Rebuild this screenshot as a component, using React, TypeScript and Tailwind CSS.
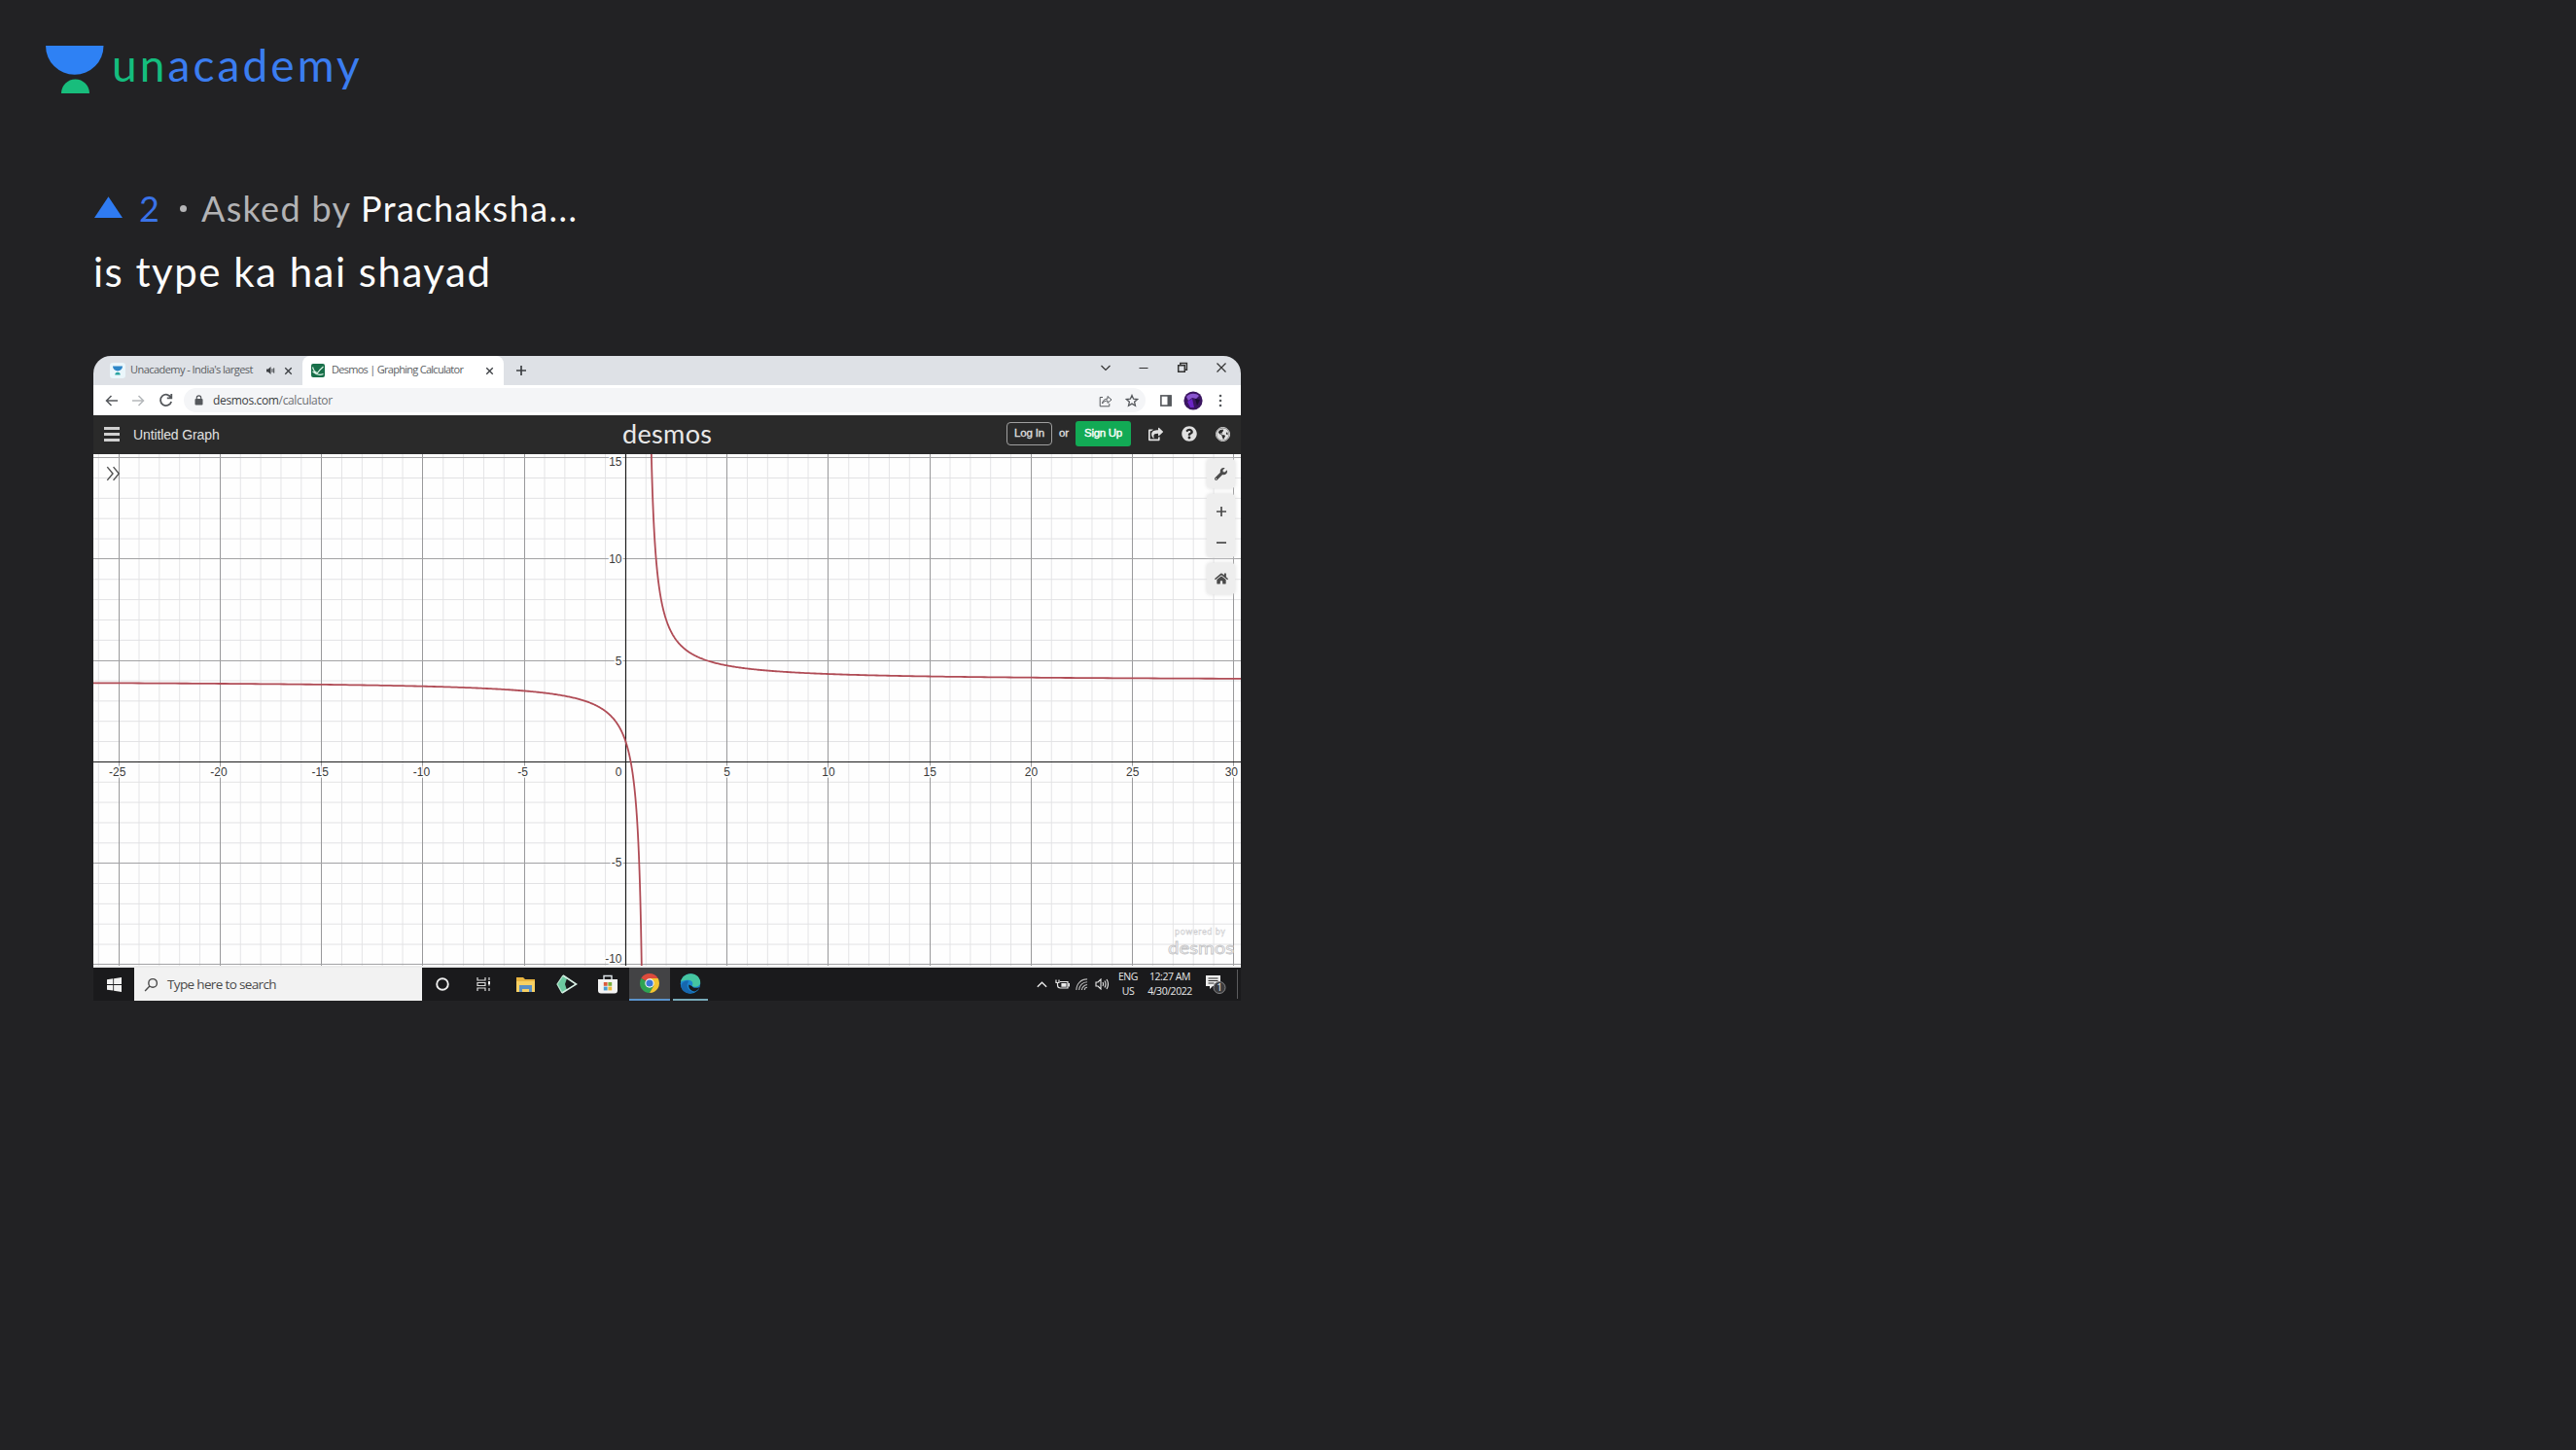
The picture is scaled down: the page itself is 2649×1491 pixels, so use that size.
import React from "react";
import { FaShareSquare, FaQuestionCircle, FaWrench, FaHome, FaGlobeAmericas } from "react-icons/fa";

const UNIT = 20.85;
const OX = 547.4;
const OY = 316.4;
const GW = 1180;
const GH = 526;

const px = (x: number) => OX + x * UNIT;
const py = (y: number) => OY - y * UNIT;
const crisp = (v: number) => Math.floor(v) + 0.5;

function branch(from: number, to: number) {
  const pts: string[] = [];
  const n = 400;
  for (let i = 0; i <= n; i++) {
    const t = i / n;
    const d = from * Math.pow(to / from, t);
    pts.push(px(1 + d).toFixed(2) + "," + py(4 + 3 / d).toFixed(2));
  }
  return "M" + pts.join("L");
}

function Graph() {
  const xs = Array.from({ length: 57 }, (_, i) => i - 26);
  const ys = Array.from({ length: 26 }, (_, i) => i - 10);
  return (
    <svg width={GW} height={GH} viewBox={`0 0 ${GW} ${GH}`} className="block">
      <rect width={GW} height={GH} fill="#fefefe" />
      {xs.filter((x) => x % 5 !== 0).map((x) => (
        <line key={x} x1={px(x)} x2={px(x)} y1={0} y2={GH} stroke="#e4e4e6" strokeWidth={1} />
      ))}
      {ys.filter((y) => y % 5 !== 0).map((y) => (
        <line key={y} x1={0} x2={GW} y1={py(y)} y2={py(y)} stroke="#e2e2e4" strokeWidth={1} />
      ))}
      {xs.filter((x) => x % 5 === 0).map((x) => (
        <line key={x} x1={crisp(px(x))} x2={crisp(px(x))} y1={0} y2={GH} stroke="#99999b" strokeWidth={1} />
      ))}
      {ys.filter((y) => y % 5 === 0).map((y) => (
        <line key={y} x1={0} x2={GW} y1={crisp(py(y))} y2={crisp(py(y))} stroke="#a2a2a4" strokeWidth={1} />
      ))}
      <line x1={crisp(OX)} x2={crisp(OX)} y1={0} y2={GH} stroke="#1c1c1c" strokeWidth={1.2} />
      <line x1={0} x2={GW} y1={crisp(OY)} y2={crisp(OY)} stroke="#1c1c1c" strokeWidth={1.2} />
      <path d={branch(0.25, 30)} fill="none" stroke="#b04c56" strokeWidth={1.8} />
      <path d={branch(-0.19, -28)} fill="none" stroke="#b04c56" strokeWidth={1.8} />
      <g
        fontFamily="Liberation Sans, sans-serif"
        fontSize={12}
        fill="#3a3a3a"
        stroke="#fefefe"
        strokeWidth={3}
        paintOrder="stroke"
      >
        {[-25, -20, -15, -10, -5].map((x) => (
          <text key={x} x={px(x) - 1.5} y={331} textAnchor="middle">{x}</text>
        ))}
        {[5, 10, 15, 20, 25].map((x) => (
          <text key={x} x={px(x)} y={331} textAnchor="middle">{x}</text>
        ))}
        <text x={1177} y={331} textAnchor="end">30</text>
        <text x={543.5} y={331} textAnchor="end">0</text>
        <text x={543.5} y={12} textAnchor="end">15</text>
        <text x={543.5} y={111.5} textAnchor="end">10</text>
        <text x={543.5} y={216.5} textAnchor="end">5</text>
        <text x={543.5} y={424} textAnchor="end">-5</text>
        <text x={543.5} y={522.5} textAnchor="end">-10</text>
      </g>
      <g fontFamily="Lato, sans-serif" fill="#fefefe" stroke="#c4c4c6" strokeWidth={0.8}>
        <text x={1112} y={494} fontSize={9} textLength={52} strokeWidth={0.4}>powered by</text>
        <text x={1105} y={514} fontSize={18} textLength={68} lengthAdjust="spacingAndGlyphs">desmos</text>
      </g>
    </svg>
  );
}

function Cell({ className, children }: { className: string; children?: React.ReactNode }) {
  return <div className={"flex shrink-0 items-center justify-center " + className}>{children}</div>;
}

function Stroke({ d, w = 14, sw = 1.5 }: { d: string; w?: number; sw?: number }) {
  return (
    <svg width={w} height={w} viewBox="0 0 14 14" fill="none" stroke="currentColor" strokeWidth={sw} className="shrink-0">
      <path d={d} />
    </svg>
  );
}

const CROSS = "M3.5 3.5 10.5 10.5M10.5 3.5 3.5 10.5";

function TabStrip() {
  return (
    <div className="flex h-[30px] bg-[#dee1e6] font-['Open_Sans',sans-serif] text-[11px] text-[#5b5e62]">
      <div className="flex w-[215px] items-center">
        <Cell className="ml-[15px] w-[19px]">
          <svg width="16" height="16" viewBox="0 0 16 16">
            <rect width="16" height="16" rx="3" fill="#eaf6fb" />
            <path d="M3 3.5h10a5 5 0 0 1-10 0z" fill="#2d86c8" />
            <path d="M5.3 12.5a2.7 2.7 0 0 1 5.4 0z" fill="#27a3a0" />
          </svg>
        </Cell>
        <span className="ml-1 w-[128px] shrink-0 overflow-hidden whitespace-nowrap pb-px tracking-[-0.55px]">Unacademy - India's largest</span>
        <Cell className="ml-[7px] w-[18px] text-[#3c3f43]">
          <svg width="10" height="10" viewBox="0 0 10 10">
            <path d="M1 3.5h1.8L5.5 1v8L2.8 6.5H1z" fill="currentColor" />
            <path d="M7 3.2v3.6M8.7 2.4v5.2" stroke="currentColor" strokeWidth="1" />
          </svg>
        </Cell>
        <Cell className="w-[18px] text-[#3c3f43]"><Stroke d={CROSS} w={13} /></Cell>
      </div>
      <div className="flex w-[207px] items-center rounded-t-lg bg-white">
        <Cell className="ml-[8px] w-[15px]">
          <svg width="14" height="14" viewBox="0 0 14 14">
            <rect width="14" height="14" rx="2" fill="#19704a" />
            <path d="M1.5 3.5Q3 9 6.5 9.5 9 6 12.5 3M1.5 8Q7 13 12.5 10.5" stroke="#d8efe2" strokeWidth="1.2" fill="none" />
          </svg>
        </Cell>
        <span className="ml-[7px] w-[154px] shrink-0 whitespace-nowrap pb-px tracking-[-0.72px]">Desmos | Graphing Calculator</span>
        <Cell className="w-[16px] text-[#3c3f43]"><Stroke d={CROSS} w={13} /></Cell>
      </div>
      <Cell className="w-[36px] text-[#3c3f43]"><Stroke d="M7 2v10M2 7h10" w={14} sw={1.7} /></Cell>
      <div className="grow" />
      <div className="flex w-[158px] items-start pt-[5px] text-[#333]">
        <Cell className="w-[38px]"><Stroke d="M2.5 5 7 9.5 11.5 5" sw={1.2} /></Cell>
        <Cell className="w-[40px]"><Stroke d="M2.5 7.5h9" sw={1.2} /></Cell>
        <Cell className="w-[40px]"><Stroke d="M2.7 4.7h6.6v6.6H2.7zM4.8 4.5V2.6h6.6v6.6H9.5" sw={1.5} /></Cell>
        <Cell className="w-[40px]"><Stroke d="M2.5 2.5l9 9M11.5 2.5l-9 9" sw={1.2} /></Cell>
      </div>
    </div>
  );
}

function Toolbar() {
  return (
    <div className="flex h-[31px] items-center bg-white text-[#55585c]">
      <Cell className="ml-[5px] w-[28px]"><Stroke d="M13 7H1.5M6.5 2 1.5 7l5 5" /></Cell>
      <Cell className="w-[26px] text-[#b5b8bb]"><Stroke d="M1 7h11.5M7.5 2l5 5-5 5" /></Cell>
      <Cell className="w-[30px]"><Stroke d="M12 4.6A5.3 5.3 0 1 0 12.3 8.4M12.4 1v4H8.2" w={15} sw={1.7} /></Cell>
      <div className="ml-[4px] flex h-[25px] w-[992px] items-center rounded-full bg-[#f4f5f7]">
        <Cell className="ml-[4px] w-[22px]">
          <svg width="9" height="11" viewBox="0 0 9 11">
            <rect x="0.5" y="4" width="8" height="6.5" rx="1" fill="currentColor" />
            <path d="M2.3 4.5V3a2.2 2.2 0 0 1 4.4 0v1.5" stroke="currentColor" strokeWidth="1.2" fill="none" />
          </svg>
        </Cell>
        <span className="ml-[4px] font-['Open_Sans',sans-serif] text-[12px] leading-none tracking-[-0.35px] text-[#6d7073]">
          <span className="text-[#3c3f43]">desmos.com</span>/calculator
        </span>
        <div className="grow" />
        <Cell className="w-[25px]"><Stroke d="M4 3.5H1.2v9.3h9.6V10M3.5 10c.4-3 2-4.8 5.5-5V2.5L13 6 9 9.4V7C6.5 7 5 7.8 3.5 10z" sw={1} /></Cell>
        <Cell className="w-[29px]"><Stroke d="M7 1.5l1.6 3.7 4 .4-3 2.7.9 3.9L7 10.100l-3.500 2.100.9-3.900-3-2.700 4-.4z" sw={1.3} /></Cell>
      </div>
      <Cell className="w-[41px]">
        <svg width="12" height="12" viewBox="0 0 12 12">
          <rect x="0.9" y="0.9" width="10.2" height="10.2" fill="none" stroke="currentColor" strokeWidth="1.6" />
          <rect x="7.5" y="1" width="4" height="10" fill="currentColor" />
        </svg>
      </Cell>
      <Cell className="w-[15px]">
        <svg width="20" height="20" viewBox="0 0 20 20" className="shrink-0">
          <circle cx="10" cy="10" r="9.6" fill="#3a1560" />
          <path d="M3 6c3-4 10-4 13-1l-3 3-4-1-4 3z" fill="#8a55cf" />
          <path d="M4 11l5-3 2 9-4 0z" fill="#6a24c4" />
          <path d="M12 8l5 1-3 6z" fill="#1b0d33" />
        </svg>
      </Cell>
      <Cell className="w-[42px]">
        <svg width="4" height="14" viewBox="0 0 4 14" fill="currentColor">
          <circle cx="2" cy="2" r="1.3" /><circle cx="2" cy="7" r="1.3" /><circle cx="2" cy="12" r="1.3" />
        </svg>
      </Cell>
    </div>
  );
}

function DesmosHeader() {
  return (
    <div className="flex h-[40px] items-center bg-[#2a2a2a] font-['Liberation_Sans',sans-serif] text-[#e0e0e0]">
      <div className="ml-[11px] flex w-[16px] flex-col gap-[3px] pb-[2px]">
        <div className="h-[3px] bg-[#d0d0d0]" />
        <div className="h-[3px] bg-[#d0d0d0]" />
        <div className="h-[3px] bg-[#d0d0d0]" />
      </div>
      <span className="ml-[14px] w-[503px] text-[14px] tracking-[-0.12px]">Untitled Graph</span>
      <span className="w-[120px] pb-[4px] font-['Lato',sans-serif] text-[27px] leading-none tracking-[0.35px] text-[#e8e8e8]">desmos</span>
      <div className="grow" />
      <div className="flex items-center pb-[2px] text-[11.5px]">
        <div className="flex h-[24px] w-[47px] items-center justify-center whitespace-nowrap rounded border border-[#a0a0a0] tracking-[-0.15px] [-webkit-text-stroke:0.3px]">Log In</div>
        <Cell className="w-[24px] tracking-[-0.1px] [-webkit-text-stroke:0.3px]">or</Cell>
        <div className="flex h-[26px] w-[57px] items-center justify-center whitespace-nowrap rounded-[3px] bg-[#12aa55] tracking-[-0.3px] text-white [-webkit-text-stroke:0.4px]">Sign Up</div>
        <Cell className="ml-[8px] w-[34px]"><FaShareSquare size={15} /></Cell>
        <Cell className="w-[35px]"><FaQuestionCircle size={16} /></Cell>
        <Cell className="w-[36px] pr-[2px]">
          <span className="rounded-full border-[1.5px] border-[#e0e0e0]"><FaGlobeAmericas size={13} /></span>
        </Cell>
      </div>
    </div>
  );
}

function GraphArea() {
  return (
    <div className="relative h-[528px] bg-[#ececec]">
      <Graph />
      <div className="absolute left-[8px] top-[8px] flex h-[24px] w-[24px] items-center justify-center text-[#555]">
        <Stroke d="M2 1l5 6-5 6M7.5 1l5 6-5 6" w={16} sw={1.3} />
      </div>
      <div className="absolute right-[6px] top-[5px] flex w-[29px] flex-col gap-[6px] text-[#4a4a4a]">
        <Cell className="h-[30px] rounded bg-[#eeeeee] shadow-[0_0_4px_#dddddd]"><FaWrench size={13} /></Cell>
        <div className="flex flex-col rounded bg-[#eeeeee] pt-[2px] shadow-[0_0_4px_#dddddd]">
          <Cell className="h-[32px]"><Stroke d="M7 2v10M2 7h10" sw={1.7} /></Cell>
          <Cell className="h-[31px]"><Stroke d="M2 7h10" sw={1.7} /></Cell>
        </div>
        <Cell className="h-[32px] rounded bg-[#eeeeee] shadow-[0_0_4px_#dddddd]"><FaHome size={14} /></Cell>
      </div>
    </div>
  );
}

function Taskbar() {
  return (
    <div className="flex h-[34px] items-center bg-[#1a1a1c] font-['Open_Sans',sans-serif] text-[#e8e8e8]">
      <Cell className="w-[42px]">
        <svg width="15" height="15" viewBox="0 0 15 15" fill="#f2f2f2">
          <path d="M0 2.2 6.3 1.3v5.7H0zM7.1 1.2 15 0v7H7.1zM0 7.9h6.3v5.7L0 12.8zM7.1 7.9H15V15L7.1 13.8z" />
        </svg>
      </Cell>
      <div className="flex h-[34px] w-[296px] items-center bg-[#f2f2f2] text-[#4a4a4a]">
        <Cell className="w-[34px]"><Stroke d="M5.3 8.7 1 13M4.5 5.5a4 4 0 1 0 8 0 4 4 0 1 0-8 0" w={15} sw={1.3} /></Cell>
        <span className="text-[13.5px] tracking-[-0.65px]">Type here to search</span>
      </div>
      <Cell className="w-[42px]">
        <svg width="14" height="14" viewBox="0 0 14 14"><circle cx="7" cy="7" r="5.8" fill="none" stroke="#eee" strokeWidth="1.9" /></svg>
      </Cell>
      <Cell className="w-[42px]">
        <svg width="15" height="14" viewBox="0 0 15 14" fill="none" stroke="#dcdcdc" strokeWidth="1.2">
          <path d="M1 0v3h8V0M1 5.5h8v3H1zM1 14v-3h8v3M13 0v3M13 11v3M13 8.500V5.5" />
          <rect x="12" y="4" width="2" height="3" fill="#eee" stroke="none" />
        </svg>
      </Cell>
      <Cell className="w-[44px]">
        <svg width="19" height="17" viewBox="0 0 19 17">
          <path d="M0 1h7l2 2h10v13H0z" fill="#e9b440" />
          <path d="M0 5h19v11H0z" fill="#f7d063" />
          <path d="M3 16V9h13v7h-3v-3H6v3z" fill="#5a8fc4" />
        </svg>
      </Cell>
      <Cell className="w-[42px]">
        <svg width="22" height="20" viewBox="0 0 22 20">
          <path d="M7 1 1 10l5 9 5-3-2-6 2-6z" fill="#6cc9a0" />
          <path d="M7 1 20.5 10 6 19" fill="none" stroke="#d8efe4" strokeWidth="1.6" />
          <path d="M7 1 1 10l5 9" fill="none" stroke="#bfe9d5" strokeWidth="1.2" />
          <path d="M12.5 6.5 18 10l-5.5 3.5z" fill="#12181a" />
        </svg>
      </Cell>
      <Cell className="w-[41px]">
        <svg width="20" height="20" viewBox="0 0 20 20">
          <path d="M6 5V1.5h8V5" stroke="#dfe6ea" strokeWidth="1.4" fill="none" />
          <path d="M0 5h20v11.5a3 3 0 0 1-3 3H3a3 3 0 0 1-3-3z" fill="#f4f4f4" />
          <rect x="5.8" y="8" width="3.8" height="3.8" fill="#dc5a3c" />
          <rect x="10.4" y="8" width="3.8" height="3.8" fill="#7aae3c" />
          <rect x="5.8" y="12.6" width="3.8" height="3.8" fill="#4a9bd0" />
          <rect x="10.4" y="12.6" width="3.8" height="3.8" fill="#edb93a" />
        </svg>
      </Cell>
      <div className="ml-[2px] flex h-[34px] w-[42px] items-center justify-center border-b-2 border-[#5b93cc] bg-[#434345]">
        <svg width="20" height="20" viewBox="0 0 20 20">
          <path d="M10 10 1.34 5A10 10 0 0 1 18.66 5z" fill="#dd4b3c" />
          <path d="M10 10 1.34 5A10 10 0 0 0 10 20l4.3-7.5z" fill="#2fa353" />
          <path d="M10 10V5h8.66A10 10 0 0 1 10 20l4.3-7.5z" fill="#f4c531" />
          <circle cx="10" cy="10" r="4.7" fill="#f5f5f5" />
          <circle cx="10" cy="10" r="3.6" fill="#3b78d8" />
        </svg>
      </div>
      <div className="ml-[3px] flex h-[34px] w-[36px] items-center justify-center border-b-2 border-[#77a9b8]">
        <svg width="22" height="21" viewBox="0 0 22 21">
          <circle cx="11" cy="10.5" r="10.2" fill="#1b86cf" />
          <path d="M1 9C2 3 7 .3 11.5.3 17.5.3 21.2 5 21.2 9c0 3.500-3 4.800-5.700 4.800-2 0-3-.8-2.500-1.700 1-2 0-5-4-5.300C5.500 6.500 2 7.500 1 9z" fill="#45c5a0" />
          <path d="M8.5 9.5c-2 3-.5 9 6.5 9.5-5 3-12 1-13.500-5C1 10 5 7 9 7.500z" fill="#1767ae" />
          <path d="M12.5 13c1 2 5 2.500 8 1-1.500 3-4 4.500-5.500 4.500-4-.5-6.500-4-5.500-7z" fill="#1a1a1c" />
        </svg>
      </div>
      <div className="grow" />
      <Cell className="w-[22px]"><Stroke d="M2 9.5 7 4.5l5 5" w={13} sw={1.5} /></Cell>
      <Cell className="w-[20px]">
        <svg width="15" height="11" viewBox="0 0 15 11" fill="none" stroke="currentColor" strokeWidth="1.2">
          <path d="M5 2.500h8v6.500H4M1 .5v3h3v-3M2.500 3.500V6c0 2 1 3 3 3" />
          <path d="M13.500 4.500h1v2.500h-1M7 4.500h4v2.600H7z" fill="currentColor" />
        </svg>
      </Cell>
      <Cell className="w-[21px]">
        <svg width="13" height="13" viewBox="0 0 14 14" fill="none" stroke="#b8b8b8" strokeWidth="1.2">
          <path d="M1 13C1 6 6 1 13 1M4 13c0-5 4-9 9-9M7 13c0-3 3-6 6-6M10 13c0-2 1-3 3-3" />
        </svg>
      </Cell>
      <Cell className="w-[20px]">
        <svg width="14" height="12" viewBox="0 0 14 12" fill="none" stroke="currentColor" strokeWidth="1.1">
          <path d="M1 4h2l3-3v10L3 8H1zM8 4q1 2 0 4M10 2.500q2 3.500 0 7M12 1q3 5 0 10" />
        </svg>
      </Cell>
      <div className="ml-[3px] flex w-[28px] flex-col items-center gap-[3px] pb-[2px] text-[10.5px] leading-[12px] tracking-[-0.4px]">
        <span>ENG</span>
        <span>US</span>
      </div>
      <div className="ml-[4px] flex w-[50px] flex-col items-center gap-[3px] whitespace-nowrap pb-[2px] text-[10.5px] leading-[12px] tracking-[-0.45px]">
        <span>12:27 AM</span>
        <span>4/30/2022</span>
      </div>
      <Cell className="w-[43px]">
        <svg width="22" height="22" viewBox="0 0 22 22">
          <path d="M1 2h15v11H8l-3 3v-3H1z" fill="#ededed" />
          <path d="M3.5 5h10M3.5 7.5h10M3.5 10h6" stroke="#2a2a2a" strokeWidth="1.1" />
          <circle cx="15" cy="14.5" r="6" fill="#3b3b3d" stroke="#858587" strokeWidth="1" />
          <text x="15" y="18" fontSize="10" textAnchor="middle" fill="#f0f0f0" fontFamily="Open Sans, sans-serif">1</text>
        </svg>
      </Cell>
      <div className="ml-px mr-[3px] h-[30px] w-px bg-[#5c5c5e]" />
    </div>
  );
}

export default function App() {
  return (
    <div className="flex h-[1491px] w-full flex-col overflow-hidden bg-[#222224] font-['Lato',sans-serif]">
      <header className="flex h-[120px] items-start pl-[47px] pt-[37px]">
        <svg width="60" height="50" viewBox="0 0 60 50" className="mt-[10px] shrink-0">
          <path d="M0 0H59.5A29.75 29.75 0 0 1 0 0z" fill="#2e81f4" />
          <path d="M16 49a14.5 14.5 0 0 1 29 0z" fill="#18bd7c" />
        </svg>
        <span className="ml-[8px] text-[46px] leading-[60px] tracking-[3.1px] text-[#3b7df0]">
          <span className="text-[#14bd7e]">un</span>academy
        </span>
      </header>
      <main className="flex flex-col items-start pl-[96px] pt-[70px]">
        <div className="flex h-[48px] items-center whitespace-nowrap text-[36px] leading-[48px]">
          <svg width="29" height="22" viewBox="0 0 28 21" className="mb-[3px] ml-px">
            <path d="M14 0 28 21H0z" fill="#2f7bf2" />
          </svg>
          <span className="ml-[17px] w-[20px] text-[#3a73e8]">2</span>
          <span className="ml-[22px] size-[7px] rounded-full bg-[#b5b5b7]" />
          <span className="ml-[15px] w-[164px] tracking-[1.3px] text-[#b3b3b5]">Asked by</span>
          <span className="tracking-[1.45px] text-[#fafafa]">Prachaksha...</span>
        </div>
        <h1 className="mt-[11px] whitespace-nowrap text-[42px] leading-[60px] tracking-[1.5px] text-[#fcfcfc]">is type ka hai shayad</h1>
        <section className="mt-[57px] flex w-[1180px] flex-col overflow-hidden rounded-t-[18px]">
          <TabStrip />
          <Toolbar />
          <DesmosHeader />
          <GraphArea />
          <Taskbar />
        </section>
      </main>
    </div>
  );
}
